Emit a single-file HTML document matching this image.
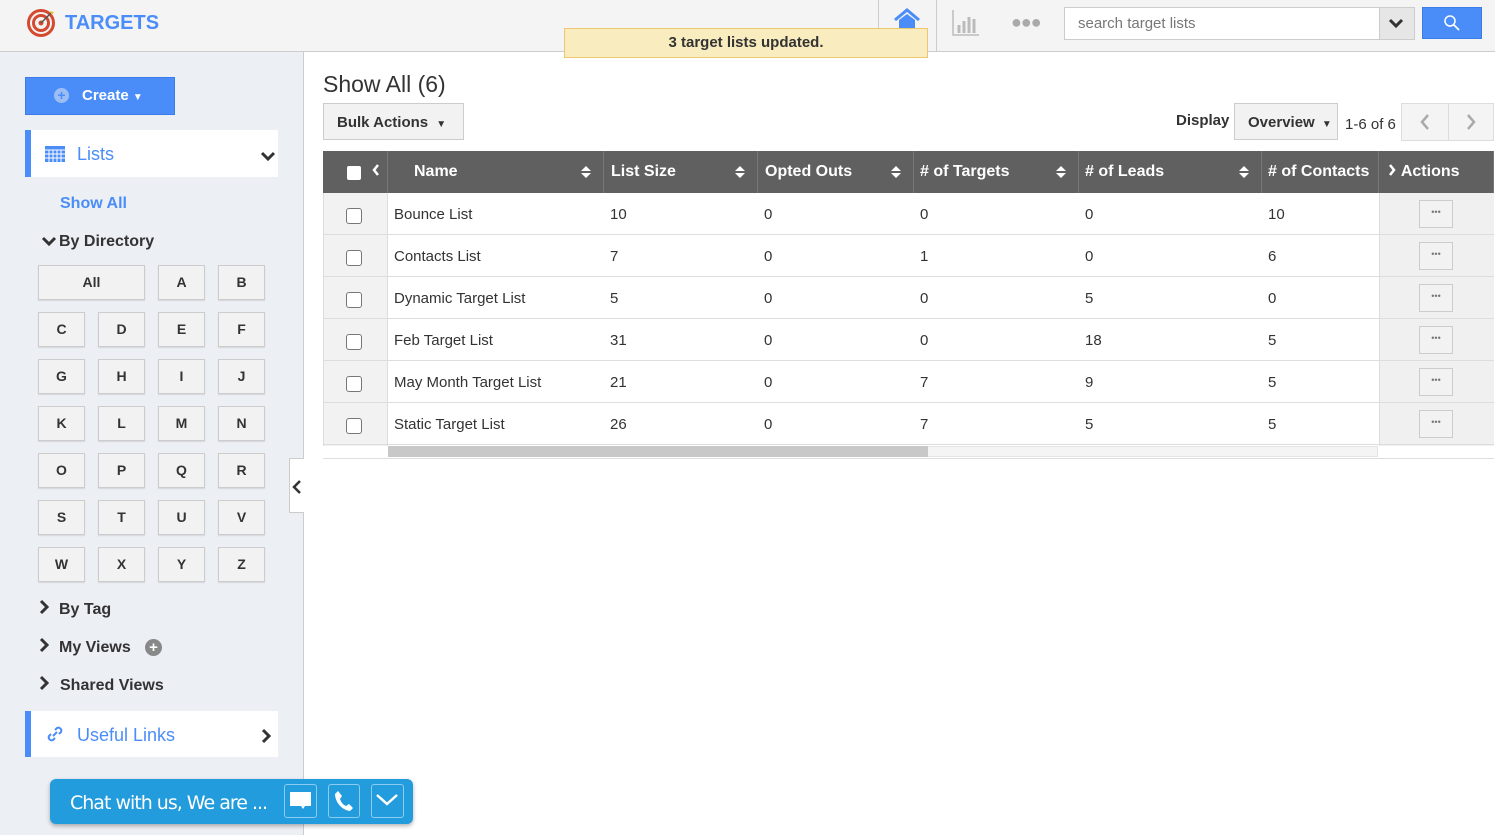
<!DOCTYPE html><html><head><style>
*{box-sizing:border-box;margin:0;padding:0}
body{width:1495px;height:835px;position:relative;overflow:hidden;font-family:"Liberation Sans",Arial,sans-serif;background:#fff;color:#333}
.a{position:absolute}
.hdr{left:0;top:0;width:1495px;height:52px;background:#f4f4f4;border-bottom:1px solid #ccc}
.side{left:0;top:52px;width:304px;height:783px;background:#eceff4;border-right:1px solid #ccc}
.lb{position:absolute;width:47px;height:35px;background:#f2f2f2;border:1px solid #ccc;box-shadow:0 1px 1px rgba(0,0,0,.1);font-size:14px;font-weight:bold;text-align:center;line-height:33px;color:#333}
.nav{font-size:16px;font-weight:bold;color:#333}
.th{position:absolute;top:151px;height:42px;background:#606060;color:#fff;font-weight:bold;font-size:16px;line-height:42px;border-right:1px solid #777;padding-left:7px}
.srt{position:absolute;right:12px;top:14px;width:10px;height:14px}
.row{position:absolute;left:323px;width:1171px;height:42px;border-bottom:1px solid #ddd;font-size:15px;line-height:44px}
.row span{position:absolute}
.cb{position:absolute;left:23px;top:15px;width:16px;height:16px;border:1px solid #777;border-radius:3px;background:#fff}
.dots{position:absolute;left:1096px;top:7px;width:34px;height:28px;border:1px solid #ccc;background:#f2f2f2;font-size:9px;line-height:22px;text-align:center;color:#777}
</style></head><body>
<div class="a hdr"></div>
<svg class="a" style="left:27px;top:9px" width="30" height="28" viewBox="0 0 30 28"><circle cx="14" cy="14" r="12.5" fill="none" stroke="#d44a2f" stroke-width="3"/><circle cx="14" cy="14" r="7.5" fill="none" stroke="#d44a2f" stroke-width="3"/><circle cx="14" cy="14" r="2.5" fill="#d44a2f"/><path d="M14 14L24 4" stroke="#555" stroke-width="1.5"/><path d="M23 2l4 1-2 3z" fill="#f4c430"/></svg>
<div class="a" style="left:65px;top:12px;font-size:20px;font-weight:bold;color:#4b8df8">TARGETS</div>
<div class="a" style="left:878px;top:0;width:59px;height:51px;border-left:1px solid #ccc;border-right:1px solid #ccc;background:#f4f4f4"></div>
<svg class="a" style="left:893px;top:8px" width="28" height="20" viewBox="0 0 28 20"><path d="M2 12L14 2l12 10" fill="none" stroke="#4b8df8" stroke-width="3"/><path d="M6 12v8h16v-8L14 6z" fill="#4b8df8"/></svg>
<svg class="a" style="left:952px;top:9px" width="28" height="28" viewBox="0 0 28 28"><path d="M1 1v25h26" fill="none" stroke="#bbb" stroke-width="1.5"/><path d="M7 24v-8M12 24v-12M17 24v-16M22 24v-14" stroke="#bbb" stroke-width="3"/></svg>
<div class="a" style="left:1011px;top:12px;font-size:18px;color:#aaa;letter-spacing:-1px">●●●</div>
<div class="a" style="left:1064px;top:7px;width:351px;height:33px;border:1px solid #ccc;background:#fff;font-size:15px;color:#777;line-height:31px;padding-left:13px">search target lists</div>
<div class="a" style="left:1379px;top:8px;width:35px;height:31px;background:#e6e6e6;border-left:1px solid #ccc"></div>
<svg class="a" style="left:1388px;top:17px" width="16" height="12" viewBox="0 0 16 12"><path d="M2 3l6 6 6-6" fill="none" stroke="#333" stroke-width="3"/></svg>
<div class="a" style="left:1422px;top:7px;width:60px;height:32px;background:#4b8df8;border:1px solid #3a7de8"></div>
<svg class="a" style="left:1443px;top:14px" width="18" height="18" viewBox="0 0 18 18"><circle cx="7" cy="7" r="5" fill="none" stroke="#fff" stroke-width="1.5"/><path d="M11 11l5 5" stroke="#fff" stroke-width="1.8"/></svg>
<div class="a" style="left:564px;top:28px;width:364px;height:30px;background:#f9ecbe;border:1px solid #ecc770;font-size:15px;font-weight:bold;text-align:center;line-height:28px;color:#333">3 target lists updated.</div>

<div class="a side"></div>
<div class="a" style="left:25px;top:77px;width:150px;height:38px;background:#4b8df8;border:1px solid #3a7de8;color:#fff;font-weight:bold;font-size:15px;line-height:36px;padding-left:56px">Create <span style="font-size:10px">▼</span></div>
<div class="a" style="left:54px;top:88px;width:15px;height:15px;border-radius:50%;background:#9dbef5;color:#4b8df8;font-size:14px;font-weight:bold;line-height:15px;text-align:center">+</div>
<div class="a" style="left:25px;top:130px;width:253px;height:47px;background:#fff;border-left:6px solid #4b8df8"></div>
<svg class="a" style="left:45px;top:146px" width="20" height="16" viewBox="0 0 20 16"><rect x="0" y="0" width="20" height="16" fill="#4b8df8"/><path d="M0 4h20M0 8h20M0 12h20M4 4v12M8 4v12M12 4v12M16 4v12" stroke="#fff" stroke-width="1"/></svg>
<div class="a" style="left:77px;top:144px;font-size:18px;color:#4b8df8">Lists</div>
<svg class="a" style="left:260px;top:150px" width="16" height="12" viewBox="0 0 16 12"><path d="M2 3l6 6 6-6" fill="none" stroke="#333" stroke-width="3"/></svg>
<div class="a" style="left:60px;top:195px;font-size:16px;font-weight:bold;color:#4b8df8">Show All</div>
<svg class="a" style="left:41px;top:235px" width="16" height="12" viewBox="0 0 16 12"><path d="M2 3l6 6 6-6" fill="none" stroke="#333" stroke-width="3"/></svg>
<div class="a nav" style="left:59px;top:233px">By Directory</div>
<div class="lb" style="left:38px;top:265px;width:107px">All</div>
<div class="lb" style="left:158px;top:265px">A</div><div class="lb" style="left:218px;top:265px">B</div>
<div class="lb" style="left:38px;top:312px">C</div><div class="lb" style="left:98px;top:312px">D</div><div class="lb" style="left:158px;top:312px">E</div><div class="lb" style="left:218px;top:312px">F</div>
<div class="lb" style="left:38px;top:359px">G</div><div class="lb" style="left:98px;top:359px">H</div><div class="lb" style="left:158px;top:359px">I</div><div class="lb" style="left:218px;top:359px">J</div>
<div class="lb" style="left:38px;top:406px">K</div><div class="lb" style="left:98px;top:406px">L</div><div class="lb" style="left:158px;top:406px">M</div><div class="lb" style="left:218px;top:406px">N</div>
<div class="lb" style="left:38px;top:453px">O</div><div class="lb" style="left:98px;top:453px">P</div><div class="lb" style="left:158px;top:453px">Q</div><div class="lb" style="left:218px;top:453px">R</div>
<div class="lb" style="left:38px;top:500px">S</div><div class="lb" style="left:98px;top:500px">T</div><div class="lb" style="left:158px;top:500px">U</div><div class="lb" style="left:218px;top:500px">V</div>
<div class="lb" style="left:38px;top:547px">W</div><div class="lb" style="left:98px;top:547px">X</div><div class="lb" style="left:158px;top:547px">Y</div><div class="lb" style="left:218px;top:547px">Z</div>
<svg class="a" style="left:38px;top:599px" width="12" height="16" viewBox="0 0 12 16"><path d="M3 2l6 6-6 6" fill="none" stroke="#333" stroke-width="3"/></svg>
<div class="a nav" style="left:59px;top:601px">By Tag</div>
<svg class="a" style="left:38px;top:637px" width="12" height="16" viewBox="0 0 12 16"><path d="M3 2l6 6-6 6" fill="none" stroke="#333" stroke-width="3"/></svg>
<div class="a nav" style="left:59px;top:639px">My Views</div>
<div class="a" style="left:145px;top:639px;width:17px;height:17px;border-radius:50%;background:#888;color:#fff;font-weight:bold;font-size:15px;line-height:17px;text-align:center">+</div>
<svg class="a" style="left:38px;top:675px" width="12" height="16" viewBox="0 0 12 16"><path d="M3 2l6 6-6 6" fill="none" stroke="#333" stroke-width="3"/></svg>
<div class="a nav" style="left:60px;top:677px">Shared Views</div>
<div class="a" style="left:25px;top:711px;width:253px;height:46px;background:#fff;border-left:6px solid #4b8df8"></div>
<svg class="a" style="left:45px;top:725px" width="20" height="18" viewBox="0 0 20 18"><path d="M8 11l4-4M6 9l-2 2a3 3 0 004 4l2-2M14 9l2-2a3 3 0 00-4-4l-2 2" fill="none" stroke="#4b8df8" stroke-width="2"/></svg>
<div class="a" style="left:77px;top:725px;font-size:18px;color:#4b8df8">Useful Links</div>
<svg class="a" style="left:260px;top:728px" width="12" height="16" viewBox="0 0 12 16"><path d="M3 2l6 6-6 6" fill="none" stroke="#333" stroke-width="3"/></svg>
<div class="a" style="left:289px;top:458px;width:15px;height:55px;background:#fff;border:1px solid #ccc;border-right:none"></div>
<svg class="a" style="left:292px;top:479px" width="10" height="16" viewBox="0 0 10 16"><path d="M8 2L2 8l6 6" fill="none" stroke="#333" stroke-width="2.5"/></svg>

<div class="a" style="left:50px;top:779px;width:363px;height:45px;background:#229cdc;border-radius:6px;box-shadow:0 2px 4px rgba(0,0,0,.3)"></div>
<div class="a" style="left:70px;top:792px;font-size:19px;color:#fff;font-family:'DejaVu Sans',sans-serif;letter-spacing:-1px">Chat with us, We are ...</div>
<div class="a" style="left:284px;top:784px;width:33px;height:34px;border:1px solid #8cccf0;border-radius:3px"></div>
<svg class="a" style="left:289px;top:790px" width="23" height="22" viewBox="0 0 23 22"><path d="M1 2h21v14H16l-2 3-2-3H1z" fill="#fff"/></svg>
<div class="a" style="left:328px;top:784px;width:32px;height:34px;border:1px solid #8cccf0;border-radius:3px"></div>
<svg class="a" style="left:333px;top:789px" width="22" height="24" viewBox="0 0 22 24"><path d="M5 2l4 5-2 3c1 3 3 6 6 7l3-2 4 4-3 3C8 21 2 12 2 5z" fill="#fff"/></svg>
<div class="a" style="left:371px;top:784px;width:33px;height:34px;border:1px solid #8cccf0;border-radius:3px"></div>
<svg class="a" style="left:375px;top:793px" width="24" height="14" viewBox="0 0 24 14"><path d="M2 2l10 9 10-9" fill="none" stroke="#fff" stroke-width="2.5"/></svg>

<div class="a" style="left:323px;top:71px;font-size:23px;color:#333">Show All (6)</div>
<div class="a" style="left:323px;top:103px;width:141px;height:37px;background:#f2f2f2;border:1px solid #ccc;font-size:15px;font-weight:bold;line-height:37px;padding-left:13px">Bulk Actions <span style="font-size:10px;margin-left:4px">▼</span></div>
<div class="a" style="left:1176px;top:112px;font-size:15px;font-weight:bold">Display</div>
<div class="a" style="left:1234px;top:103px;width:104px;height:37px;background:#f2f2f2;border:1px solid #ccc;font-size:15px;font-weight:bold;line-height:37px;padding-left:13px">Overview <span style="font-size:10px;margin-left:3px">▼</span></div>
<div class="a" style="left:1345px;top:116px;font-size:15px;color:#333">1-6 of 6</div>
<div class="a" style="left:1401px;top:103px;width:93px;height:38px;background:#f4f4f4;border:1px solid #ddd"></div>
<div class="a" style="left:1448px;top:103px;width:1px;height:38px;background:#ddd"></div>
<svg class="a" style="left:1419px;top:113px" width="12" height="18" viewBox="0 0 12 18"><path d="M9 2L3 9l6 7" fill="none" stroke="#aaa" stroke-width="2.5"/></svg>
<svg class="a" style="left:1465px;top:113px" width="12" height="18" viewBox="0 0 12 18"><path d="M3 2l6 7-6 7" fill="none" stroke="#aaa" stroke-width="2.5"/></svg>

<div class="th" style="left:323px;width:65px"><span style="position:absolute;left:24px;top:15px;width:14px;height:14px;background:#fff;border-radius:2px"></span><svg style="position:absolute;left:48px;top:12px" width="10" height="14" viewBox="0 0 10 14"><path d="M7 2L3 7l4 5" fill="none" stroke="#fff" stroke-width="2.5"/></svg></div>
<div class="th" style="left:388px;width:216px;padding-left:26px">Name<svg class="srt" viewBox="0 0 10 14"><path d="M0 6L5 1l5 5zM0 8l5 5 5-5z" fill="#fff"/></svg></div>
<div class="th" style="left:604px;width:154px">List Size<svg class="srt" viewBox="0 0 10 14"><path d="M0 6L5 1l5 5zM0 8l5 5 5-5z" fill="#fff"/></svg></div>
<div class="th" style="left:758px;width:156px">Opted Outs<svg class="srt" viewBox="0 0 10 14"><path d="M0 6L5 1l5 5zM0 8l5 5 5-5z" fill="#fff"/></svg></div>
<div class="th" style="left:914px;width:165px;padding-left:6px"># of Targets<svg class="srt" viewBox="0 0 10 14"><path d="M0 6L5 1l5 5zM0 8l5 5 5-5z" fill="#fff"/></svg></div>
<div class="th" style="left:1079px;width:183px;padding-left:6px"># of Leads<svg class="srt" viewBox="0 0 10 14"><path d="M0 6L5 1l5 5zM0 8l5 5 5-5z" fill="#fff"/></svg></div>
<div class="th" style="left:1262px;width:117px;padding-left:6px"># of Contacts</div>
<div class="th" style="left:1379px;width:115px;padding-left:8px"><svg style="vertical-align:-1px" width="10" height="14" viewBox="0 0 10 14"><path d="M3 2l4 5-4 5" fill="none" stroke="#fff" stroke-width="2.5"/></svg> Actions</div>

<div class="a" style="left:323px;top:193px;width:65px;height:253px;background:#f2f2f2;border-left:1px solid #ddd;border-right:1px solid #ddd"></div>
<div class="a" style="left:1379px;top:193px;width:115px;height:253px;background:#f0f0f0;border-left:1px solid #ddd"></div>

<div class="row" style="top:193px"><div class="cb"></div><span style="left:71px">Bounce List</span><span style="left:287px">10</span><span style="left:441px">0</span><span style="left:597px">0</span><span style="left:762px">0</span><span style="left:945px">10</span><div class="dots">•••</div></div>
<div class="row" style="top:235px"><div class="cb"></div><span style="left:71px">Contacts List</span><span style="left:287px">7</span><span style="left:441px">0</span><span style="left:597px">1</span><span style="left:762px">0</span><span style="left:945px">6</span><div class="dots">•••</div></div>
<div class="row" style="top:277px"><div class="cb"></div><span style="left:71px">Dynamic Target List</span><span style="left:287px">5</span><span style="left:441px">0</span><span style="left:597px">0</span><span style="left:762px">5</span><span style="left:945px">0</span><div class="dots">•••</div></div>
<div class="row" style="top:319px"><div class="cb"></div><span style="left:71px">Feb Target List</span><span style="left:287px">31</span><span style="left:441px">0</span><span style="left:597px">0</span><span style="left:762px">18</span><span style="left:945px">5</span><div class="dots">•••</div></div>
<div class="row" style="top:361px"><div class="cb"></div><span style="left:71px">May Month Target List</span><span style="left:287px">21</span><span style="left:441px">0</span><span style="left:597px">7</span><span style="left:762px">9</span><span style="left:945px">5</span><div class="dots">•••</div></div>
<div class="row" style="top:403px"><div class="cb"></div><span style="left:71px">Static Target List</span><span style="left:287px">26</span><span style="left:441px">0</span><span style="left:597px">7</span><span style="left:762px">5</span><span style="left:945px">5</span><div class="dots">•••</div></div>
<div class="a" style="left:388px;top:446px;width:990px;height:11px;background:#f4f4f4;border:1px solid #e4e4e4"></div>
<div class="a" style="left:388px;top:446px;width:540px;height:11px;background:#c8c8c8"></div>
<div class="a" style="left:323px;top:458px;width:1171px;height:1px;background:#ddd"></div>
</body></html>
